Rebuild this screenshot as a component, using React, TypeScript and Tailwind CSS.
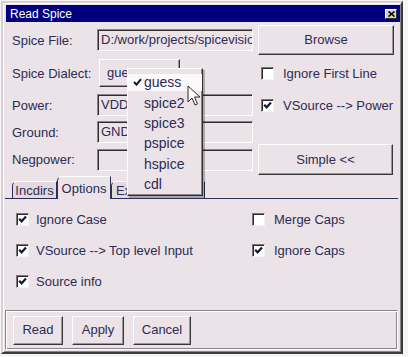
import type { ReactNode } from "react";

// "Read Spice" dialog: classic raised/sunken widgets on a pinkish grey face,
// with the dialect dropdown opened over the form.

const dialects = ["guess", "spice2", "spice3", "pspice", "hspice", "cdl"];

function Check({ on }: { on: boolean }) {
  return (
    <span className="flex h-[13px] w-[13px] shrink-0 items-center justify-center border border-t-[#7c767a] border-l-[#7c767a] border-b-[#f6f2f4] border-r-[#f6f2f4] bg-white shadow-[inset_1px_1px_0_#2a2a2a]">
      {on && (
        <svg width="9" height="9" viewBox="0 0 9 9" aria-hidden>
          <path d="M1.2 3.8 L3.6 6.3 L8 1.6" fill="none" stroke="#15153a" strokeWidth="2.2" />
        </svg>
      )}
    </span>
  );
}

function CheckRow({ on, label, gap = "gap-[9px]" }: { on: boolean; label: string; gap?: string }) {
  return (
    <div className={`flex items-center ${gap}`}>
      <Check on={on} />
      <span className="text-[13px] leading-none">{label}</span>
    </div>
  );
}

function Btn({ children, className = "" }: { children: ReactNode; className?: string }) {
  return (
    <div
      className={`flex items-center justify-center border border-t-white border-l-white border-b-[#383838] border-r-[#383838] shadow-[inset_-1px_-1px_0_#9c969a] text-[13px] ${className}`}
    >
      {children}
    </div>
  );
}

function Field({ value }: { value: string }) {
  return (
    <div className="flex h-[22px] w-[156px] items-center overflow-hidden whitespace-nowrap border border-t-[#8a8488] border-l-[#8a8488] border-b-white border-r-white pl-[3px] text-[13px] shadow-[inset_1px_1px_0_#2e2e2e]">
      {value}
    </div>
  );
}

function Label({ children }: { children: ReactNode }) {
  return <span className="w-[85px] shrink-0 text-[13px] leading-none">{children}</span>;
}

export default function App() {
  return (
    <div className="h-[357px] w-[408px] bg-[#f7f6f7] pl-[1px] pt-[1px] font-['Liberation_Sans',Arial,sans-serif] text-[#2c2c54]">
      <div className="relative flex h-[353px] w-[402px] flex-col border-2 border-t-[#d6d0d4] border-l-[#d6d0d4] border-b-[#3c3c3c] border-r-[#3c3c3c] bg-[#ebe3e7] shadow-[inset_1px_1px_0_#ffffff,inset_-1px_-1px_0_#8c868a]">
        {/* title bar */}
        <div className="ml-[3px] mr-[1px] mt-[2px] flex h-[17px] items-center justify-between bg-[#00007c] pl-[4px] pr-[3px]">
          <span className="text-[12px] leading-none text-white">Read Spice</span>
          <span className="flex h-[10px] w-[12px] items-center justify-center border border-t-white border-l-white border-b-[#303030] border-r-[#303030] bg-[#d4d0c8]">
            <svg width="7" height="6" viewBox="0 0 7 6" aria-hidden>
              <path d="M0.5 0.5 L6.5 5.5 M6.5 0.5 L0.5 5.5" stroke="#000" strokeWidth="1.6" />
            </svg>
          </span>
        </div>

        {/* form rows */}
        <div className="flex pl-[9px]">
          <div className="flex w-[241px] flex-col">
            <div className="mt-[3px] flex h-[30px] items-center">
              <Label>Spice File:</Label>
              <Field value="D:/work/projects/spicevision/test.sp" />
            </div>
            <div className="mt-[4px] flex h-[28px] items-center">
              <span className="w-[87px] shrink-0 text-[13px] leading-none">Spice Dialect:</span>
              <Btn className="h-[28px] w-[81px] justify-start pl-[7px]">guess</Btn>
            </div>
            <div className="mt-[3px] flex h-[30px] items-center">
              <Label>Power:</Label>
              <Field value="VDD" />
            </div>
            <div className="mt-[1px] flex h-[22px] items-center">
              <Label>Ground:</Label>
              <Field value="GND" />
            </div>
            <div className="mt-[1px] flex h-[31px] items-center">
              <Label>Negpower:</Label>
              <Field value="" />
            </div>
          </div>
          <div className="ml-[5px] flex w-[136px] flex-col">
            <Btn className="mt-[3px] h-[30px]">Browse</Btn>
            <div className="mt-[4px] flex h-[28px] items-center pl-[3px]">
              <CheckRow on={false} label="Ignore First Line" />
            </div>
            <div className="mt-[3px] flex h-[30px] items-center pl-[3px]">
              <CheckRow on label="VSource --> Power" />
            </div>
            <div className="mt-[1px] h-[22px]" />
            <Btn className="mt-[1px] h-[31px] w-[135px]">Simple &lt;&lt;</Btn>
          </div>
        </div>

        {/* tabs */}
        <div className="ml-[2px] mr-[3px] mt-[1px] flex h-[23px] items-end border-b border-[#2e2e5a] pl-[7px]">
          <div className="flex h-[17px] w-[45px] items-center justify-center rounded-tl-[5px] border border-b-0 border-t-white border-l-[#2e2e5a] border-r-[#2e2e5a] bg-[#e2dade] text-[13px] leading-none">
            Incdirs
          </div>
          <div className="relative z-10 -mb-[1px] flex h-[23px] w-[54px] items-center justify-center rounded-tl-[5px] border border-b-0 border-t-white border-l-[#2e2e5a] border-r-[#2e2e5a] bg-[#ebe3e7] pt-[1px] text-[13px] leading-none">
            Options
          </div>
          <div className="flex h-[17px] w-[94px] items-center rounded-tl-[5px] border border-b-0 border-t-white border-l-[#2e2e5a] border-r-[#2e2e5a] bg-[#e2dade] pl-[4px] text-[13px] leading-none">
            Excludes
          </div>
        </div>

        {/* options page */}
        <div className="grid grid-cols-[236px_1fr] pl-[13px] pt-[5px]">
          <div className="flex h-[31px] items-center">
            <CheckRow on label="Ignore Case" gap="gap-[7px]" />
          </div>
          <div className="flex h-[31px] items-center">
            <CheckRow on={false} label="Merge Caps" />
          </div>
          <div className="flex h-[31px] items-center">
            <CheckRow on label="VSource --> Top level Input" gap="gap-[7px]" />
          </div>
          <div className="flex h-[31px] items-center">
            <CheckRow on label="Ignore Caps" />
          </div>
          <div className="flex h-[31px] items-center">
            <CheckRow on label="Source info" gap="gap-[7px]" />
          </div>
        </div>

        {/* button strip */}
        <div className="mb-[2px] ml-[2px] mr-[3px] mt-auto flex h-[40px] items-center gap-[9px] border border-t-[#8c868a] border-l-[#8c868a] border-b-white border-r-white pl-[7px] shadow-[inset_1px_1px_0_#ffffff,inset_-1px_-1px_0_#8c868a]">
          <Btn className="h-[29px] w-[50px]">Read</Btn>
          <Btn className="h-[29px] w-[52px]">Apply</Btn>
          <Btn className="h-[29px] w-[58px]">Cancel</Btn>
        </div>

        {/* opened dialect menu */}
        <div className="absolute left-[124px] top-[65px] z-20 flex h-[128px] w-[76px] flex-col border border-t-white border-l-white border-b-[#303030] border-r-[#303030] bg-[#ebe3e7] pt-[3px] shadow-[inset_-1px_-1px_0_#8c868a,2px_2px_0_rgba(0,0,0,0.25)]">
          {dialects.map((d, i) => (
            <div key={d} className="flex h-[20.4px] items-center">
              <div
                className={`flex h-[17px] w-full items-center text-[14px] leading-none ${i === 0 ? "bg-[#fbf9fa]" : ""}`}
              >
                <span className="flex w-[16px] justify-center pl-[2px]">
                  {i === 0 && (
                    <svg width="9" height="8" viewBox="0 0 9 8" aria-hidden>
                      <path d="M1 4 L3.5 6.6 L8 1.2" fill="none" stroke="#15153a" strokeWidth="2" />
                    </svg>
                  )}
                </span>
                <span>{d}</span>
              </div>
            </div>
          ))}
        </div>

        {/* mouse pointer */}
        <svg
          className="absolute left-[184px] top-[82px] z-30"
          width="14"
          height="22"
          viewBox="0 0 14 22"
          aria-hidden
        >
          <path
            d="M1 1 L1 17 L5 13 L8 20 L10.5 19 L7.5 12 L13 12 Z"
            fill="#ffffff"
            stroke="#2a2a2a"
            strokeWidth="1"
            strokeLinejoin="round"
          />
        </svg>
      </div>
    </div>
  );
}
